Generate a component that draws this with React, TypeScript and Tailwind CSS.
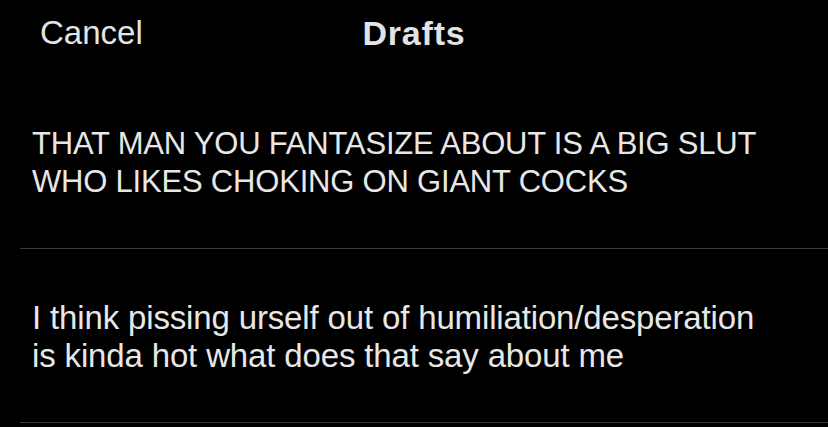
import React from "react";

const drafts = [
  {
    lines: ["THAT MAN YOU FANTASIZE ABOUT IS A BIG SLUT", "WHO LIKES CHOKING ON GIANT COCKS"],
    size: "text-[31px] tracking-[-0.2px]",
  },
  {
    lines: ["I think pissing urself out of humiliation/desperation", "is kinda hot what does that say about me"],
    size: "text-[33px] tracking-[-0.15px]",
  },
];

export default function App() {
  return (
    <div
      className="w-[828px] h-[427px] overflow-hidden bg-black text-[#e7e7e7]"
      style={{ fontFamily: '"Liberation Sans", Arial, sans-serif' }}
    >
      <header className="relative h-[75px]">
        <button className="absolute left-[40px] top-[14px] text-[33px] leading-[38px] text-[#e3e3e3]">
          Cancel
        </button>
        <h1 className="w-full pt-[14px] text-center text-[34px] leading-[38px] font-bold tracking-[0.8px] text-[#e3e3e3]">
          Drafts
        </h1>
      </header>
      <ul>
        {drafts.map((d, i) => (
          <li key={i}>
            <div className={`pl-[32px] pt-[50px] pb-[47px] leading-[38px] ${d.size}`}>
              {d.lines.map((l, j) => (
                <div key={j} className="whitespace-nowrap">
                  {l}
                </div>
              ))}
            </div>
            <div className="ml-5 h-px bg-[#3a3a3a]" />
          </li>
        ))}
      </ul>
    </div>
  );
}
